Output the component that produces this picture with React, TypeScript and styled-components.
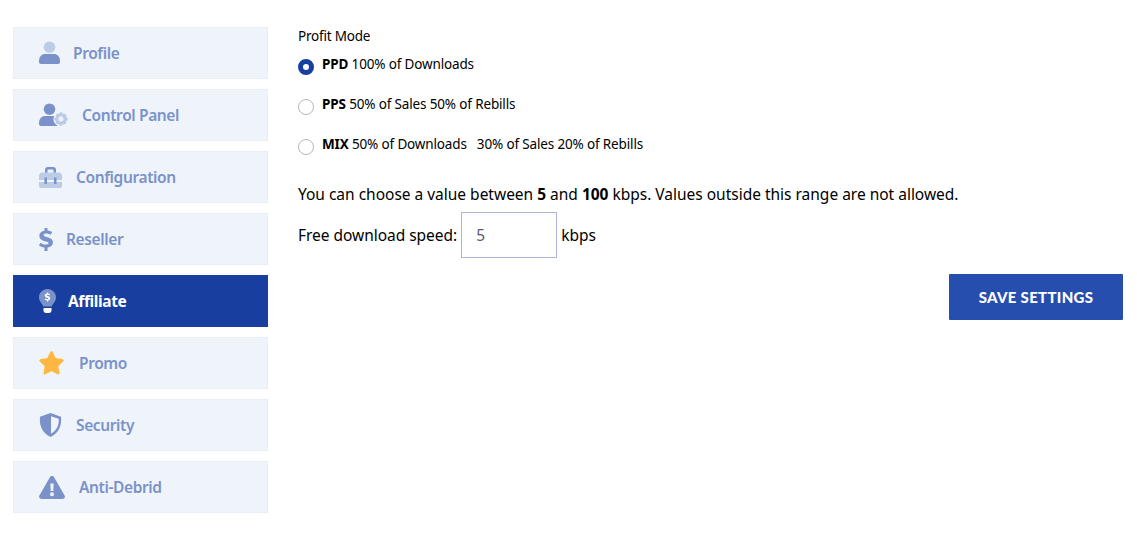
import React from "react";
import styled, { createGlobalStyle } from "styled-components";

const Global = createGlobalStyle`
  html, body { margin: 0; padding: 0; background: #fff; }
  body { font-family: "Noto Sans", "Open Sans", sans-serif; color: #000; }
`;

const Page = styled.div`
  display: flex;
  align-items: flex-start;
  gap: 30px;
  padding: 27px 14px 30px 13px;
`;

const Sidebar = styled.nav`
  flex: 0 0 255px;
  display: flex;
  flex-direction: column;
  gap: 10px;
`;

const NavItem = styled.a<{ $active?: boolean }>`
  box-sizing: border-box;
  height: 52px;
  display: flex;
  align-items: center;
  gap: 13px;
  padding-left: 25px;
  border: 1px solid ${(p) => (p.$active ? "#183ea0" : "#e8eef8")};
  background: ${(p) => (p.$active ? "#183ea0" : "#eff4fb")};
  color: ${(p) => (p.$active ? "#ffffff" : "#7a92c9")};
  font-size: 15.5px;
  font-weight: ${(p) => (p.$active ? 700 : 600)};
  letter-spacing: -0.38px;
`;

const Icon = styled.svg`
  display: block;
  flex: none;
`;

const Main = styled.main`
  flex: 1;
  min-width: 0;
  display: flex;
  flex-direction: column;
  align-items: flex-start;
`;

const Caption = styled.div`
  font-size: 13.5px;
  line-height: 18px;
  letter-spacing: -0.2px;
  margin-bottom: 10px;
`;

const RadioRow = styled.label`
  height: 40px;
  display: flex;
  align-items: flex-start;
  gap: 8px;
  font-size: 13.5px;
  line-height: 18px;
  letter-spacing: -0.15px;
  b { font-weight: 700; }
`;

const RadioMark = styled.span<{ $on?: boolean }>`
  box-sizing: border-box;
  width: 16px;
  height: 16px;
  margin-top: 4px;
  border-radius: 50%;
  background: #fff;
  border: ${(p) => (p.$on ? "5px solid #183ea0" : "1px solid #b4b9c2")};
`;

const Note = styled.p`
  margin: 0;
  padding-top: 8px;
  font-size: 15.5px;
  line-height: 22px;
  letter-spacing: -0.01px;
  b { font-weight: 700; }
`;

const SpeedRow = styled.div`
  display: flex;
  align-items: center;
  gap: 4px;
  margin-top: 7px;
  font-size: 15.5px;
  letter-spacing: -0.03px;
`;

const SpeedInput = styled.input`
  box-sizing: border-box;
  width: 96px;
  height: 46px;
  padding: 0 14px;
  border: 1px solid #a9b7dc;
  border-radius: 0;
  outline: none;
  color: #5b5b6b;
  font: inherit;
`;

const Actions = styled.div`
  align-self: stretch;
  display: flex;
  justify-content: flex-end;
  margin-top: 16px;
`;

const SaveButton = styled.button`
  width: 174px;
  height: 46px;
  border: 0;
  border-radius: 1px;
  background: #264eaf;
  color: #fff;
  font-family: "Lato", sans-serif;
  font-weight: 900;
  font-size: 15px;
  letter-spacing: 0.3px;
  padding: 0;
`;

const items: { label: string; icon: React.ReactNode; active?: boolean }[] = [
  {
    label: "Profile",
    icon: (
      <Icon width="21" height="24" viewBox="0 0 21 24">
        <circle cx="10.5" cy="6.2" r="5.8" fill="#bccbe6" />
        <path d="M0 20c0-4.6 3-7 6-7h9c3 0 6 2.4 6 7v1c0 1.200-.8 2-2 2H2c-1.200 0-2-.8-2-2z" fill="#7a92c9" />
      </Icon>
    ),
  },
  {
    label: "Control Panel",
    icon: (
      <Icon width="30" height="24" viewBox="0 0 30 24">
        <circle cx="10.5" cy="6.2" r="5.8" fill="#7a92c9" />
        <path d="M0 20c0-4.6 3-7 6-7h9c3 0 5 1 6 3l-3 7H2c-1.200 0-2-.8-2-2z" fill="#7a92c9" />
        <circle cx="22" cy="16" r="7.600" fill="#eff4fb" />
        <g fill="none" stroke="#bccbe6">
          <circle cx="22" cy="16" r="4.200" strokeWidth="3.400" />
          <path d="M22 9.300v13.400M15.300 16h13.400M17.300 11.300l9.400 9.400M26.700 11.300l-9.400 9.400" strokeWidth="2.400" strokeDasharray="2.400 8.600" />
        </g>
      </Icon>
    ),
  },
  {
    label: "Configuration",
    icon: (
      <Icon width="24" height="21" viewBox="0 0 24 21">
        <path d="M6 6V3c0-1.700 1-3 3-3h5c2 0 3 1.300 3 3v3h-2.500V3.200c0-.5-.3-.8-.8-.8H9.300c-.5 0-.8.3-.8.8V6z" fill="#7a92c9" />
        <path d="M0 9c0-2 1.300-3.500 3-3.500h17c1.700 0 3 1.500 3 3.500v4H0z" fill="#bccbe6" />
        <path d="M0 15h23v4c0 1.200-.8 2-2 2H2c-1.200 0-2-.8-2-2z" fill="#bccbe6" />
        <path d="M5.500 10.500h2.500V17H5.500zM15 10.500h2.500V17H15z" fill="#7a92c9" />
      </Icon>
    ),
  },
  {
    label: "Reseller",
    icon: (
      <Icon width="14" height="23" viewBox="0 0 14 23">
        <path d="M5.500 0h3v2.600c1.900.2 3.500.8 4.600 1.500l-1.300 2.700C10.500 6 8.900 5.400 7.200 5.400c-1.700 0-2.600.6-2.600 1.500 0 2.600 9.400 1.400 9.400 7.500 0 2.700-2.100 4.600-5.500 5V23h-3v-3.500c-2.300-.2-4.200-1-5.500-2l1.400-2.700c1.500 1 3.300 1.800 5.200 1.800 1.900 0 3-.7 3-1.800C9.600 12.900.3 14.300.3 7.800c0-2.700 2-4.700 5.200-5.100z" fill="#7a92c9" />
      </Icon>
    ),
  },
  {
    label: "Affiliate",
    active: true,
    icon: (
      <Icon width="16" height="24" viewBox="0 0 16 24" overflow="visible">
        <path d="M8.500 0C3.800 0 0 3.700 0 8.300c0 2.500 1.100 4.400 2.400 6 .9 1.100 1.600 2.200 1.900 3.300h8.400c.3-1.100 1-2.200 1.900-3.300 1.300-1.600 2.400-3.500 2.400-6C17 3.700 13.200 0 8.500 0z" fill="#7a92c9" />
        <path d="M4.500 19h8v2.200c0 1.500-1 2.800-2.500 2.800H7c-1.500 0-2.500-1.300-2.500-2.800z" fill="#fff" />
        <path d="M7.900 3.500h1.200v1.100c.8.100 1.400.3 1.900.6l-.5 1.100c-.6-.4-1.300-.6-1.900-.6-.7 0-1.100.2-1.100.6 0 1.100 3.800.5 3.800 3 0 1.100-.8 1.900-2.200 2.100v1.100H7.900v-1.100c-.9-.1-1.700-.4-2.200-.8l.6-1.100c.6.400 1.300.7 2 .7.800 0 1.200-.2 1.200-.7 0-1.100-3.800-.5-3.800-3 0-1.100.8-1.800 2.200-2z" fill="#fff" />
      </Icon>
    ),
  },
  {
    label: "Promo",
    icon: (
      <Icon width="27" height="24" viewBox="0 0 27 24">
        <path d="M12.500 1.600l3.300 6.800 7.400 1.100-5.400 5.200 1.300 7.400-6.600-3.500L5.900 22.100l1.300-7.400-5.400-5.200 7.400-1.100z" fill="#ffb743" stroke="#ffb743" strokeWidth="2.800" strokeLinejoin="round" />
      </Icon>
    ),
  },
  {
    label: "Security",
    icon: (
      <Icon width="24" height="24" viewBox="0 0 24 24">
        <path d="M11.500 0L22 3.800c.8 8.500-1.800 16.300-10.500 20.200C2.800 20.100.2 12.300 1 3.800z" fill="#7a92c9" />
        <path d="M12 3.200l7.700 2.600c.3 6.200-1.500 11.500-7.700 15z" fill="#eff4fb" />
      </Icon>
    ),
  },
  {
    label: "Anti-Debrid",
    icon: (
      <Icon width="27" height="23" viewBox="0 0 27 23">
        <path fillRule="evenodd" d="M10.900 1.200c.9-1.600 3.300-1.600 4.200 0l10.500 18.200c.9 1.600-.3 3.600-2.100 3.600H2.500C.7 23-.5 21 .4 19.400zM11.300 7.500l.4 7.500h2.600l.4-7.500zM13 16.200a2 2 0 1 0 0 4 2 2 0 0 0 0-4z" fill="#7a92c9" />
      </Icon>
    ),
  },
];

export default function App() {
  return (
    <Page>
      <Global />
      <Sidebar>
        {items.map((it) => (
          <NavItem key={it.label} $active={it.active}>
            {it.icon}
            <span>{it.label}</span>
          </NavItem>
        ))}
      </Sidebar>
      <Main>
        <Caption>Profit Mode</Caption>
        <RadioRow>
          <RadioMark $on />
          <span><b>PPD</b> 100% of Downloads</span>
        </RadioRow>
        <RadioRow>
          <RadioMark />
          <span><b>PPS</b> 50% of Sales 50% of Rebills</span>
        </RadioRow>
        <RadioRow>
          <RadioMark />
          <span><b>MIX</b> 50% of Downloads &nbsp; 30% of Sales 20% of Rebills</span>
        </RadioRow>
        <Note>
          You can choose a value between <b>5</b> and <b>100</b> kbps. Values outside this range are not allowed.
        </Note>
        <SpeedRow>
          <span>Free download speed:</span>
          <SpeedInput defaultValue="5" />
          <span>kbps</span>
        </SpeedRow>
        <Actions>
          <SaveButton>SAVE SETTINGS</SaveButton>
        </Actions>
      </Main>
    </Page>
  );
}
